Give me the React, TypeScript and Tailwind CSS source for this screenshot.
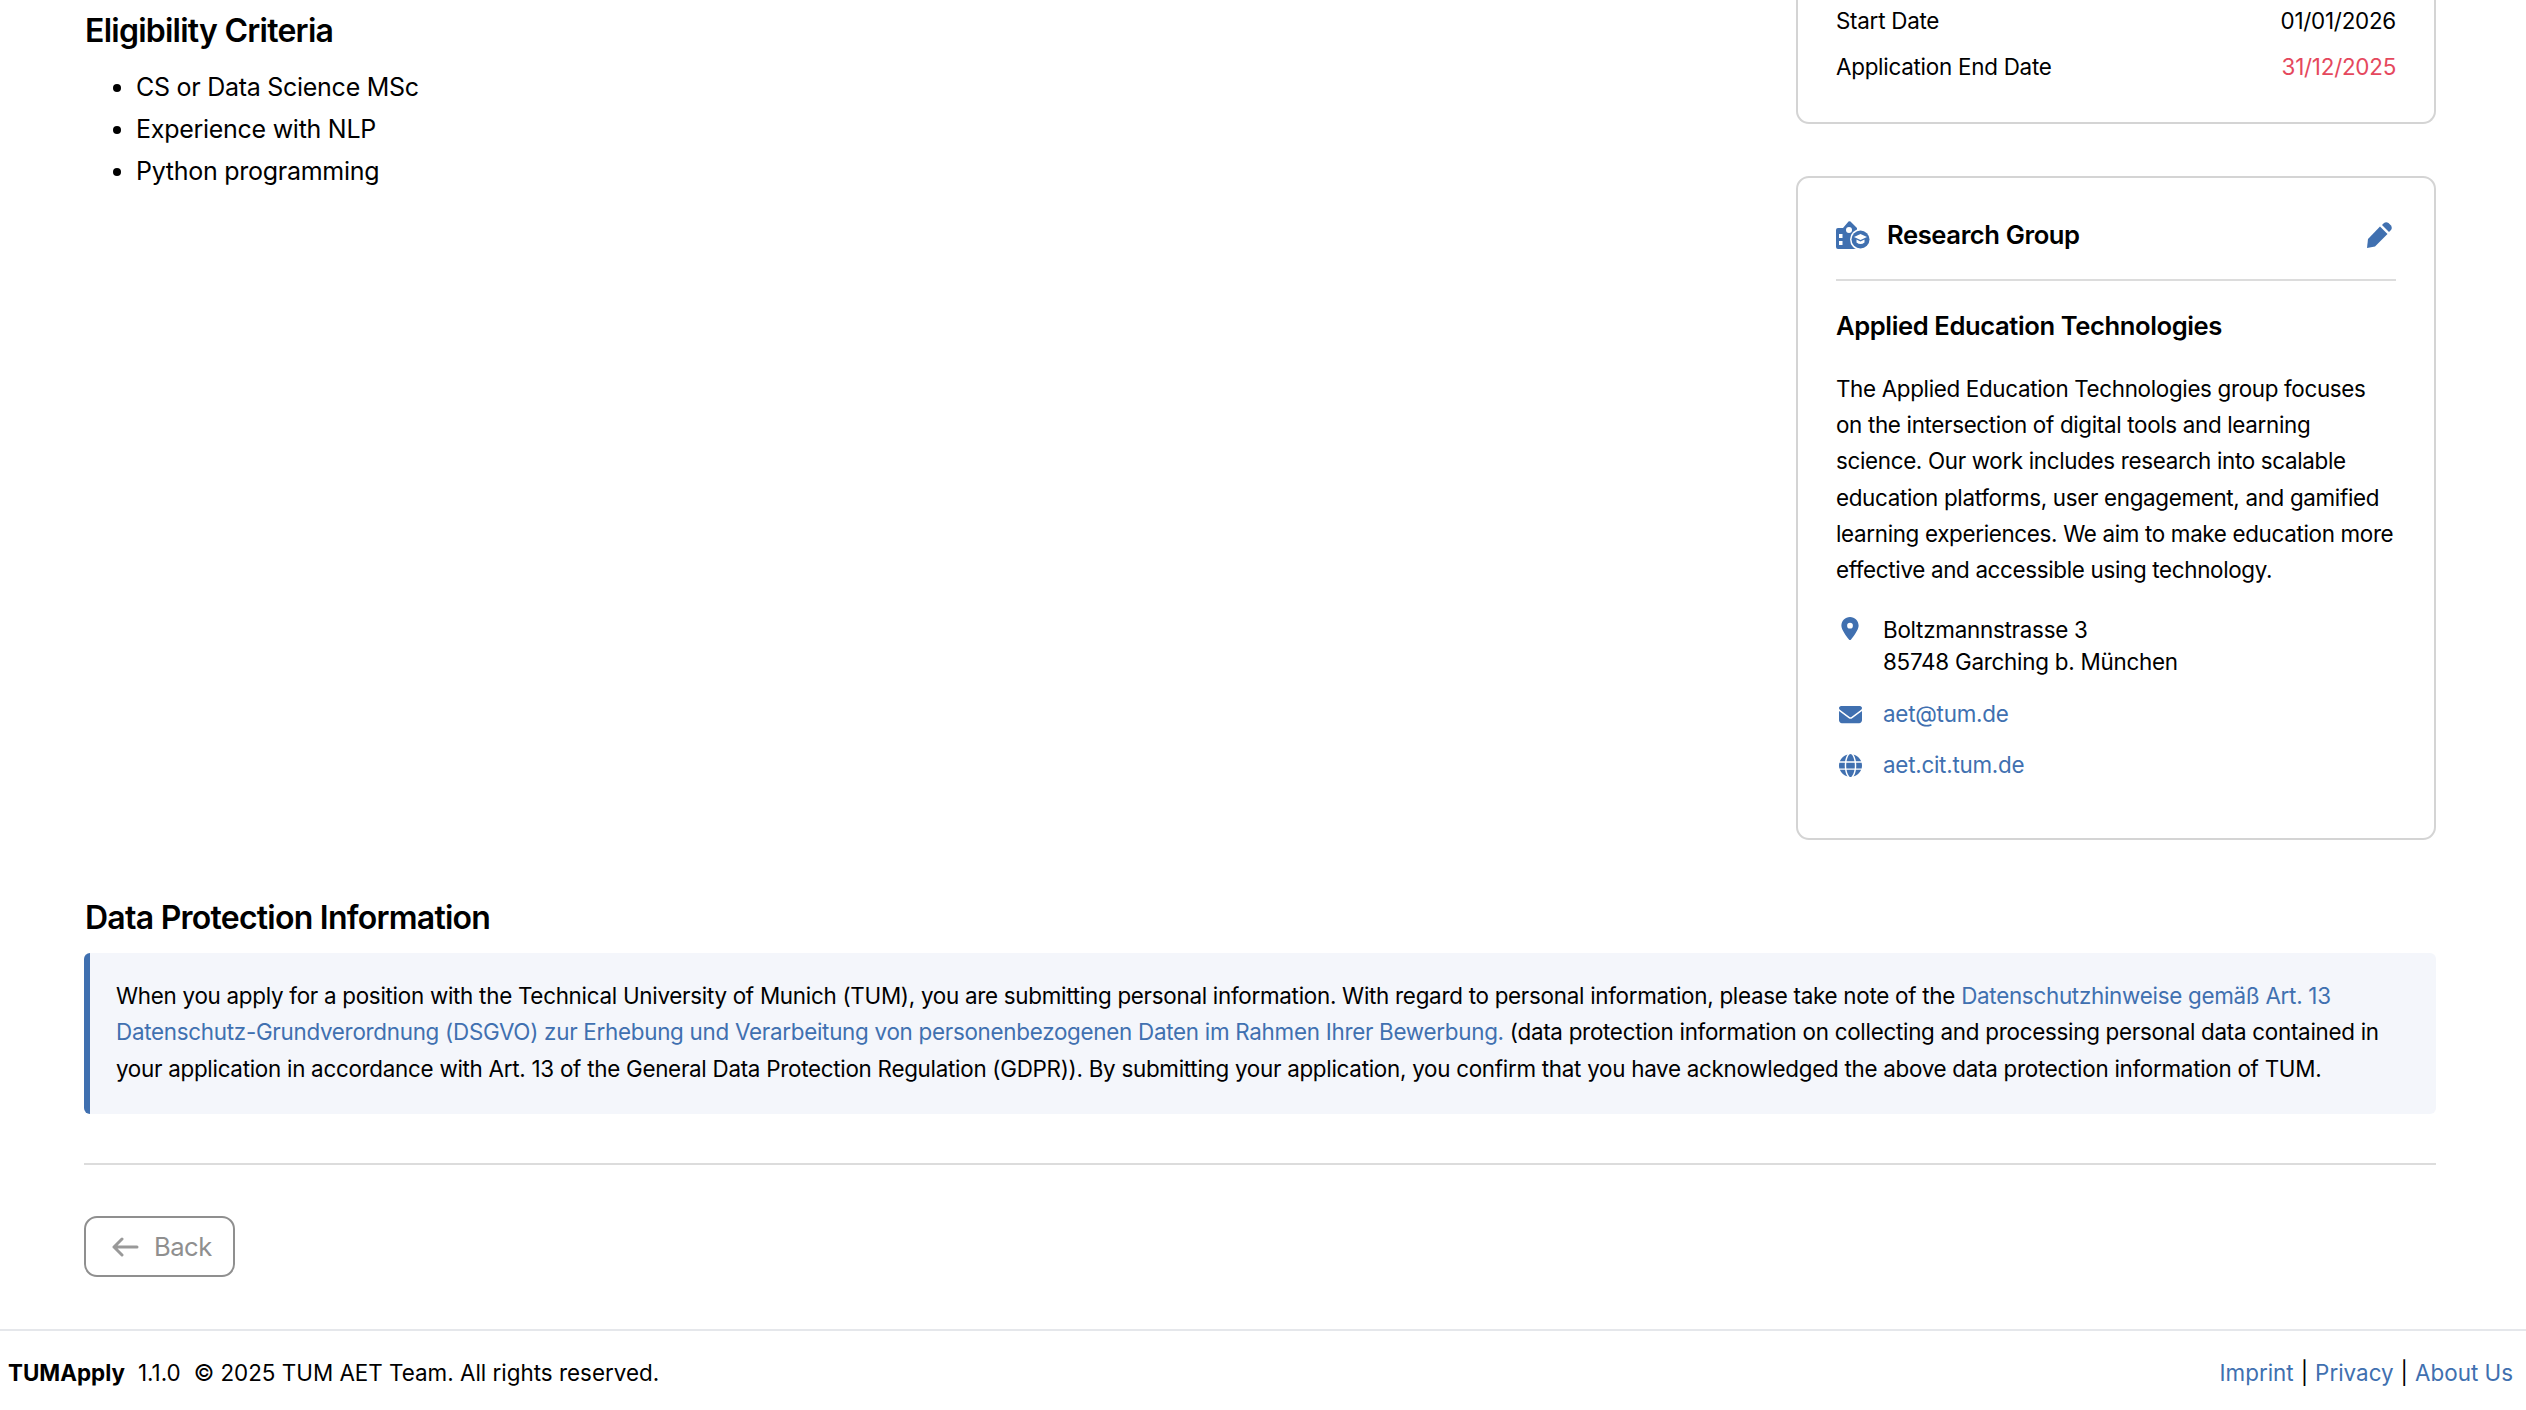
import React from "react";
import { FaLocationDot, FaEnvelope, FaGlobe } from "react-icons/fa6";

function GroupIcon() {
  return (
    <svg width="34" height="28" viewBox="0 0 34 28" className="text-[#4070b0] shrink-0">
      <path fill="currentColor" d="M0 9 Q0 7 2 7 L7 7 L12.5 0.5 Q13.5 0 14.5 0.5 L21 7 L21 28 L2 28 Q0 28 0 26 Z" />
      <circle cx="24.5" cy="18.5" r="10.5" fill="white" />
      <circle cx="24.5" cy="18.5" r="9" fill="currentColor" />
      <path fill="white" d="M24.5 13 L31 16 L24.5 19 L18 16 Z" />
      <path fill="white" d="M20.5 18.5 L24.5 20.5 L28.5 18.5 L28.5 21.5 Q24.5 24.5 20.5 21.5 Z" />
      <rect x="3" y="13" width="3.5" height="4" fill="white" />
      <rect x="3" y="20" width="3.5" height="4" fill="white" />
      <circle cx="13" cy="9" r="3" fill="white" />
    </svg>
  );
}

function PenIcon() {
  return (
    <svg width="26" height="26" viewBox="0 0 26 26" className="text-[#4070b0] mr-[4px] -mt-[2px]" fill="currentColor">
      <path d="M14 4.5 L21.5 12 L9 24.5 L1 26 L2 17 Z" />
      <path d="M16 3 L18 1 Q20 -0.5 22.5 1 L25 3.5 Q26.5 6 25 8 L23 10 Z" />
    </svg>
  );
}

export default function App() {
  return (
    <div className="h-[1410px] w-[2526px] overflow-hidden bg-white text-black flex flex-col font-['Inter',sans-serif]">
      <main className="flex-1 pl-[84px] pr-[90px]">
        <div className="flex justify-between h-[872px]">
          <section className="pt-[11px] pl-px">
            <h2 className="text-[32px] leading-[40px] font-semibold tracking-[-0.75px]">Eligibility Criteria</h2>
            <ul className="list-disc pl-[51px] mt-[15px] text-[25px] leading-[42px] tracking-[-0.27px]">
              <li>CS or Data Science MSc</li>
              <li>Experience with NLP</li>
              <li>Python programming</li>
            </ul>
          </section>
          <aside className="w-[640px] flex flex-col gap-[52px] text-[22.4px] tracking-[-0.25px]">
            <div className="h-[124px] border-2 border-t-0 border-[#d4d4d4] rounded-b-[13px] px-[38px]">
              <div className="flex justify-between h-[41px] items-center leading-[36px]">
                <span>Start Date</span>
                <span>01/01/2026</span>
              </div>
              <div className="flex justify-between h-[51px] items-center leading-[36px]">
                <span>Application End Date</span>
                <span className="text-[#e5485d]">31/12/2025</span>
              </div>
            </div>
            <div className="h-[664px] border-2 border-[#d4d4d4] rounded-[13px] px-[38px] pt-[34px]">
              <div className="flex items-center justify-between pb-[20px] border-b-2 border-[#dcdcdc] h-[69px]">
                <div className="flex items-center gap-[17px]">
                  <GroupIcon />
                  <span className="text-[25.6px] font-semibold tracking-[-0.4px]">Research Group</span>
                </div>
                <PenIcon />
              </div>
              <h3 className="mt-[25px] text-[25.6px] leading-[40px] font-semibold tracking-[-0.4px]">Applied Education Technologies</h3>
              <p className="mt-[25px] leading-[36.2px] tracking-[-0.33px]">
                The Applied Education Technologies group focuses on the intersection of digital tools and learning science. Our work includes research into scalable education platforms, user engagement, and gamified learning experiences. We aim to make education more effective and accessible using technology.
              </p>
              <div className="mt-[26px] flex flex-col leading-[32px]">
                <div className="flex gap-[19px]">
                  <div className="w-[28px] flex justify-center pt-[3px]"><FaLocationDot className="text-[#4070b0] w-[18px] h-[23px]" /></div>
                  <div>Boltzmannstrasse 3<br />85748 Garching b. München</div>
                </div>
                <div className="flex gap-[19px] items-center mt-[20px]">
                  <div className="w-[28px] flex justify-center"><FaEnvelope className="text-[#4070b0] w-[23px] h-[23px]" /></div>
                  <a className="text-[#4070b0]">aet@tum.de</a>
                </div>
                <div className="flex gap-[19px] items-center mt-[19px]">
                  <div className="w-[28px] flex justify-center"><FaGlobe className="text-[#4070b0] w-[23px] h-[23px]" /></div>
                  <a className="text-[#4070b0]">aet.cit.tum.de</a>
                </div>
              </div>
            </div>
          </aside>
        </div>
        <h2 className="mt-[26px] pl-px text-[32px] leading-[40px] font-semibold tracking-[-0.75px]">Data Protection Information</h2>
        <div className="mt-[15px] h-[161px] rounded-[6px] border-l-[6px] border-[#4070b0] bg-[#f4f6fb] pl-[26px] pr-[30px] pt-[25px] text-[22.4px] leading-[36.4px] tracking-[-0.275px]">
          When you apply for a position with the Technical University of Munich (TUM), you are submitting personal information. With regard to personal information, please take note of the{" "}
          <a className="text-[#4070b0]">Datenschutzhinweise gemäß Art. 13 Datenschutz-Grundverordnung (DSGVO) zur Erhebung und Verarbeitung von personenbezogenen Daten im Rahmen Ihrer Bewerbung.</a>{" "}
          (data protection information on collecting and processing personal data contained in your application in accordance with Art. 13 of the General Data Protection Regulation (GDPR)). By submitting your application, you confirm that you have acknowledged the above data protection information of TUM.
        </div>
        <div className="mt-[49px] border-t-2 border-[#dcdcdc]" />
        <button className="mt-[51px] h-[61px] w-[151px] rounded-[13px] border-2 border-[#8f8f8f] flex items-center pl-[25px] gap-[15px] text-[#8f8f8f] text-[25.6px] tracking-[-0.5px]">
          <svg width="28" height="20" viewBox="0 0 28 20" fill="none" stroke="#999999" strokeWidth="3" strokeLinecap="round" strokeLinejoin="round">
            <path d="M26 10 H3 M11 2 L3 10 L11 18" />
          </svg>
          <span className="pt-[2px]">Back</span>
        </button>
      </main>
      <footer className="h-[81px] border-t-2 border-[#e5e7eb] flex items-center justify-between pl-[8px] pr-[13px] text-[22.4px] pt-[5px]">
        <div className="flex gap-[13px]">
          <span className="font-bold">TUMApply</span>
          <span>1.1.0</span>
          <span>© 2025 TUM AET Team. All rights reserved.</span>
        </div>
        <div className="flex gap-[7px]">
          <a className="text-[#4070b0]">Imprint</a><span>|</span><a className="text-[#4070b0]">Privacy</a><span>|</span><a className="text-[#4070b0]">About Us</a>
        </div>
      </footer>
    </div>
  );
}
